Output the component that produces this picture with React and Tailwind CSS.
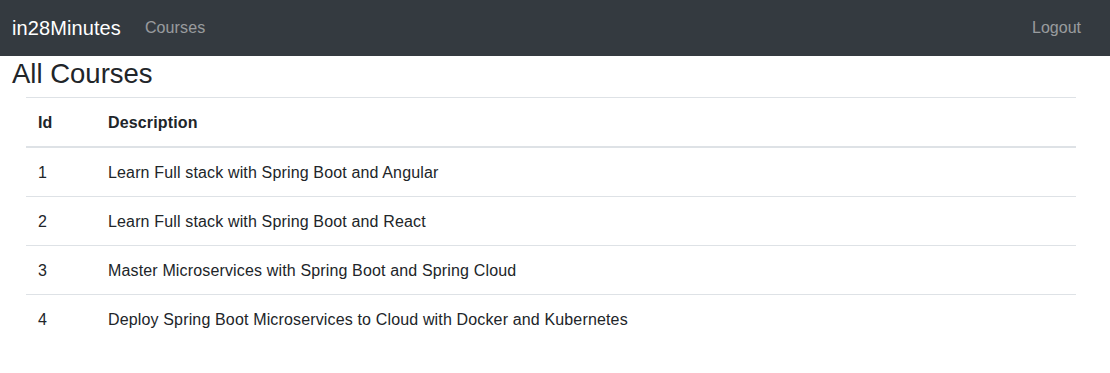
const courses = [
  { id: 1, description: "Learn Full stack with Spring Boot and Angular" },
  { id: 2, description: "Learn Full stack with Spring Boot and React" },
  { id: 3, description: "Master Microservices with Spring Boot and Spring Cloud" },
  { id: 4, description: "Deploy Spring Boot Microservices to Cloud with Docker and Kubernetes" },
];

export default function App() {
  return (
    <div className="min-h-screen bg-white font-['Liberation_Sans',Arial,sans-serif] text-[#212529]">
      <nav className="flex h-[56px] items-center bg-[#343a40] pl-[12px] pr-[29px]">
        <a className="text-[20px] leading-[30px] tracking-[0.1px] text-white">in28Minutes</a>
        <a className="ml-[24px] text-[16px] tracking-[0.1px] text-white/50">Courses</a>
        <a className="ml-auto text-[16px] text-white/50">Logout</a>
      </nav>

      <h3 className="px-[12px] pt-[1px] text-[27.5px] leading-[33px]">All Courses</h3>

      <div className="ml-[26px] mr-[34px] mt-[7px]">
        <table className="w-full border-collapse text-left text-[16px] leading-[24px] tracking-[0.15px]">
          <thead>
            <tr className="border-t border-b-2 border-[#dee2e6]">
              <th className="w-[70px] px-[12px] pt-[13px] pb-[11px] font-bold">Id</th>
              <th className="px-[12px] pt-[13px] pb-[11px] font-bold">Description</th>
            </tr>
          </thead>
          <tbody>
            {courses.map((c, i) => (
              <tr key={c.id} className={i < courses.length - 1 ? "border-b border-[#dee2e6]" : ""}>
                <td className="px-[12px] pt-[13px] pb-[11px]">{c.id}</td>
                <td className="px-[12px] pt-[13px] pb-[11px]">{c.description}</td>
              </tr>
            ))}
          </tbody>
        </table>
      </div>
    </div>
  );
}
